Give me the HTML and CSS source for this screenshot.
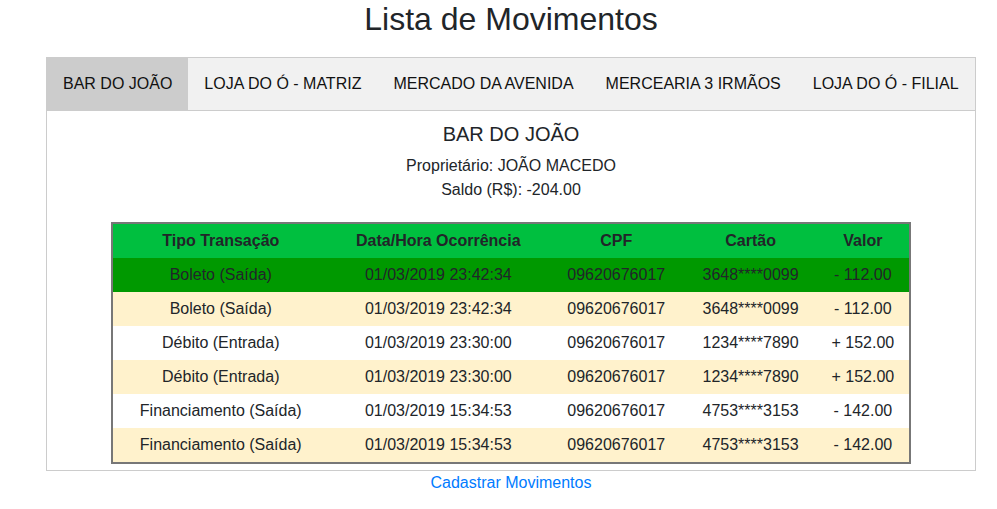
FILE: index.html
```html
<!DOCTYPE html>
<html lang="pt-BR">
<head>
<meta charset="utf-8">
<title>Lista de Movimentos</title>
<link rel="stylesheet" href="styles.css">
</head>
<body>
<main class="page">
  <h2 class="title">Lista de Movimentos</h2>
  <section class="panel">
    <nav class="tabs">
      <button class="tab active">BAR DO JOÃO</button>
      <button class="tab">LOJA DO Ó - MATRIZ</button>
      <button class="tab">MERCADO DA AVENIDA</button>
      <button class="tab">MERCEARIA 3 IRMÃOS</button>
      <button class="tab">LOJA DO Ó - FILIAL</button>
    </nav>
    <div class="tab-content">
      <h5 class="store-name">BAR DO JOÃO</h5>
      <p class="info">Proprietário: JOÃO MACEDO</p>
      <p class="info">Saldo (R$): -204.00</p>
      <table class="moves">
        <colgroup>
          <col class="c1"><col class="c2"><col class="c3"><col class="c4"><col class="c5">
        </colgroup>
        <thead>
          <tr><th>Tipo Transação</th><th>Data/Hora Ocorrência</th><th>CPF</th><th>Cartão</th><th>Valor</th></tr>
        </thead>
        <tbody>
          <tr class="hover"><td>Boleto (Saída)</td><td>01/03/2019 23:42:34</td><td>09620676017</td><td>3648****0099</td><td>- 112.00</td></tr>
          <tr class="stripe"><td>Boleto (Saída)</td><td>01/03/2019 23:42:34</td><td>09620676017</td><td>3648****0099</td><td>- 112.00</td></tr>
          <tr><td>Débito (Entrada)</td><td>01/03/2019 23:30:00</td><td>09620676017</td><td>1234****7890</td><td>+ 152.00</td></tr>
          <tr class="stripe"><td>Débito (Entrada)</td><td>01/03/2019 23:30:00</td><td>09620676017</td><td>1234****7890</td><td>+ 152.00</td></tr>
          <tr><td>Financiamento (Saída)</td><td>01/03/2019 15:34:53</td><td>09620676017</td><td>4753****3153</td><td>- 142.00</td></tr>
          <tr class="stripe"><td>Financiamento (Saída)</td><td>01/03/2019 15:34:53</td><td>09620676017</td><td>4753****3153</td><td>- 142.00</td></tr>
        </tbody>
      </table>
    </div>
  </section>
  <div class="footer-link"><a href="#">Cadastrar Movimentos</a></div>
</main>
</body>
</html>
```
FILE: styles.css
```css
* { box-sizing: border-box; }
html, body { margin: 0; padding: 0; background: #fff; }
body {
  font-family: "Liberation Sans", Arial, sans-serif;
  font-size: 16px;
  line-height: 1.5;
  color: #212529;
}
.page {
  width: 930px;
  margin-left: 46px;
}
.title {
  margin: 0;
  height: 57px;
  font-size: 32px;
  font-weight: 400;
  line-height: 1.2;
  text-align: center;
}
.panel {
  border: 1px solid #ccc;
}
.tabs {
  display: flex;
  background: #f1f1f1;
  border-bottom: 1px solid #ccc;
}
.tab {
  border: none;
  margin: 0;
  background: transparent;
  font-family: inherit;
  font-size: 16px;
  line-height: 24px;
  padding: 14px 16px;
  color: #111;
  cursor: pointer;
}
.tab.active { background: #ccc; }
.tab-content {
  padding: 11px 12px 6px;
  text-align: center;
}
.store-name {
  margin: 0 0 8px;
  font-size: 20px;
  font-weight: 400;
  line-height: 1.2;
}
.info { margin: 0; }
.info + .info { margin-bottom: 20px; }
.moves {
  width: 800px;
  margin: 0 auto;
  border-collapse: collapse;
  border: 2px solid #777;
  table-layout: fixed;
}
.c1 { width: 216px; }
.c2 { width: 219px; }
.c3 { width: 136px; }
.c4 { width: 132px; }
.c5 { width: 93px; }
.moves th, .moves td {
  height: 34px;
  padding: 5px 0;
  text-align: center;
  vertical-align: middle;
  white-space: nowrap;
}
.moves thead tr { background: #00bf3f; }
.moves th { font-weight: 700; }
.moves tr.hover { background: #009900; }
.moves tr.stripe { background: #fff2cc; }
.footer-link {
  text-align: center;
  line-height: 24px;
}
.footer-link a {
  color: #007bff;
  text-decoration: none;
}
```
